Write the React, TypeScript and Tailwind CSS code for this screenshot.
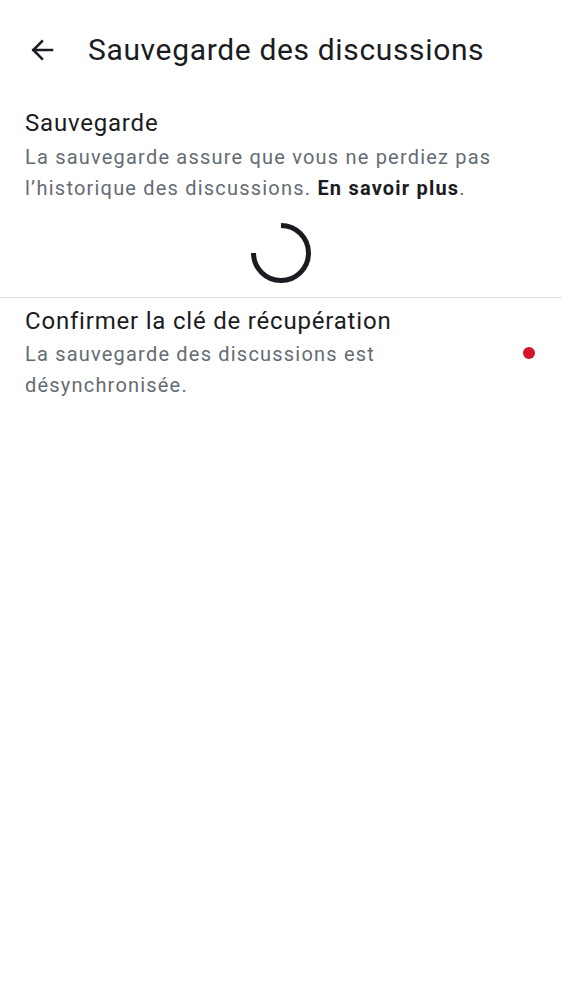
import React from 'react';

function Spinner() {
  return (
    <svg width="64" height="64" viewBox="0 0 64 64" fill="none">
      <path
        d="M32 4.5 A27.5 27.5 0 1 1 4.5 32"
        stroke="#1b1c21"
        strokeWidth="5"
        fill="none"
      />
    </svg>
  );
}

export default function App() {
  return (
    <div className="min-h-screen bg-white font-['Roboto',sans-serif] text-[#1b1c21]">
      {/* Top bar */}
      <div className="flex items-center h-[100px] pl-[27px]">
        <svg width="30" height="30" viewBox="0 0 24 24" fill="none" stroke="#1b1c21" strokeWidth="2" strokeLinecap="square">
          <path d="M20 12H5M12 5l-7 7 7 7" />
        </svg>
        <h1 className="ml-[31px] text-[30px] leading-[36px] tracking-[0.65px]">Sauvegarde des discussions</h1>
      </div>

      {/* Sauvegarde section */}
      <div className="px-[25px] pt-[7px]">
        <div className="text-[24px] leading-[32px] tracking-[0.8px]">Sauvegarde</div>
        <p className="text-[20px] leading-[30.5px] tracking-[1.2px] text-[#656b74] mt-[3px]">
          La sauvegarde assure que vous ne perdiez pas l’historique des discussions.{' '}
          <span className="font-bold text-[#1b1c21]">En savoir plus</span>.
        </p>
      </div>
      <div className="flex justify-center pt-[18px] pb-[12px]">
        <Spinner />
      </div>
      <div className="h-px bg-[#e2e2e4]" />

      {/* Recovery key */}
      <div className="flex items-center px-[25px] pt-[7px]">
        <div className="flex-1">
          <div className="text-[24px] leading-[32px] tracking-[0.8px]">Confirmer la clé de récupération</div>
          <p className="text-[20px] leading-[31px] tracking-[1.2px] text-[#656b74] mt-[2px] max-w-[440px]">
            La sauvegarde des discussions est désynchronisée.
          </p>
        </div>
        <div className="w-[12px] h-[12px] rounded-full bg-[#d4142a] mr-[2px]" />
      </div>
    </div>
  );
}
